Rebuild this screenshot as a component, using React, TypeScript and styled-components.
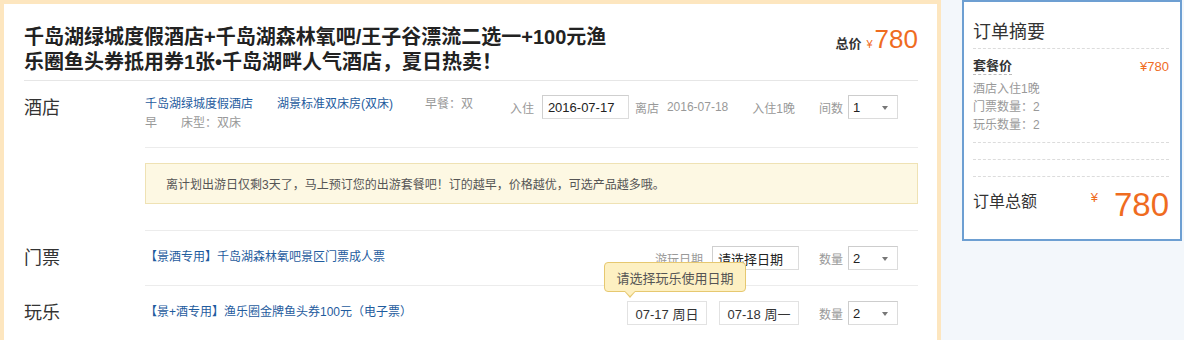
import React from 'react'
import styled, { createGlobalStyle } from 'styled-components'

const GlobalStyle = createGlobalStyle`
  html, body {
    margin: 0;
    padding: 0;
    background: #f3f7fb;
    font-family: "Liberation Sans", "Noto Sans CJK SC", sans-serif;
    color: #333;
  }
`

const Page = styled.div`
  display: flex;
  align-items: flex-start;
  gap: 21px;
  width: 1184px;
  height: 340px;
  overflow: hidden;
`

const Main = styled.div`
  width: 941px;
  min-height: 400px;
  box-sizing: border-box;
  background: #fff;
  border: 4px solid #fde6bf;
  border-bottom: none;
  padding: 0 19px 0 20px;
`

const Header = styled.div`
  display: flex;
  justify-content: space-between;
  align-items: flex-start;
  padding: 21px 0 5px;
  border-bottom: 1px solid #e6e6e6;
`

const Title = styled.h1`
  margin: 0;
  width: 594px;
  font-size: 20px;
  line-height: 25px;
  font-weight: bold;
  color: #222;
`

const TotalPrice = styled.div`
  display: flex;
  align-items: baseline;
  padding-top: 1px;
  color: #ef6c1f;
`

const TotalLabel = styled.span`
  font-size: 13px;
  font-weight: bold;
  color: #333;
  margin-right: 5px;
`

const Yen = styled.span<{ size: number }>`
  font-size: ${({ size }) => size}px;
  margin-right: 2px;
`

const Amount = styled.span<{ size: number }>`
  font-size: ${({ size }) => size}px;
  line-height: 1;
`

const Section = styled.div`
  display: flex;
  align-items: flex-start;
`

const Row = styled.div`
  display: flex;
  align-items: center;
`

const Label = styled.div<{ top?: number }>`
  width: 121px;
  flex-shrink: 0;
  font-size: 18px;
  line-height: 24px;
  padding-top: ${({ top }) => top || 0}px;
  color: #333;
`

const Content = styled.div`
  flex: 1;
`

const HotelTop = styled.div`
  display: flex;
  align-items: flex-start;
  padding: 14px 20px 14px 0;
  border-bottom: 1px solid #ececec;
`

const HotelInfo = styled.div`
  width: 336px;
  font-size: 12px;
  line-height: 19px;
  color: #999;
`

const InfoItem = styled.span<{ gap: number }>`
  display: inline-block;
  margin-right: ${({ gap }) => gap}px;
`

const Link = styled.a`
  color: #1f5c9e;
  text-decoration: none;
  font-size: 12px;
`

const Controls = styled.div`
  display: flex;
  align-items: center;
  margin-left: auto;
  position: relative;
`

const Caption = styled.span<{ gap?: number }>`
  font-size: 12px;
  color: #999;
  margin-right: ${({ gap }) => gap ?? 6}px;
  white-space: nowrap;
`

const Field = styled.div<{ w: number; gap?: number }>`
  width: ${({ w }) => w}px;
  height: 24px;
  box-sizing: border-box;
  border: 1px solid #dcdcdc;
  border-top-color: #cfcfcf;
  border-left-color: #cfcfcf;
  margin-right: ${({ gap }) => gap ?? 0}px;
  padding-left: 5px;
  display: flex;
  align-items: center;
  font-size: 13px;
  color: #222;
  background: #fff;
  position: relative;
`

const DateBox = styled.div<{ gap?: number }>`
  width: 80px;
  height: 24px;
  box-sizing: border-box;
  border: 1px solid #e2e2e2;
  margin-right: ${({ gap }) => gap ?? 0}px;
  display: flex;
  align-items: center;
  justify-content: center;
  font-size: 13px;
  color: #333;
  position: relative;
`

const Select = styled.div`
  width: 50px;
  height: 24px;
  box-sizing: border-box;
  border: 1px solid #dcdcdc;
  border-top-color: #cdcdcd;
  border-left-color: #cdcdcd;
  padding-left: 4px;
  display: flex;
  align-items: center;
  font-size: 13px;
  color: #222;
  position: relative;
  &::after {
    content: '';
    position: absolute;
    right: 9px;
    top: 10px;
    border-left: 3px solid transparent;
    border-right: 3px solid transparent;
    border-top: 4px solid #777;
  }
`

const Notice = styled.div`
  margin: 15px 0 26px;
  height: 41px;
  box-sizing: border-box;
  background: #fdf8e3;
  border: 1px solid #efe2b4;
  padding-left: 20px;
  display: flex;
  align-items: center;
  font-size: 12px;
  color: #555;
`

const ProductLine = styled.div`
  flex: 1;
  height: 55px;
  box-sizing: border-box;
  border-top: 1px solid #ececec;
  display: flex;
  align-items: center;
  padding: 0 20px 0 0;
`

const ProductName = styled(Link)`
  margin-bottom: 5px;
`

const Tooltip = styled.div`
  position: absolute;
  left: -24px;
  bottom: 32px;
  width: 142px;
  height: 30px;
  box-sizing: border-box;
  background: #fdf0c2;
  border: 1px solid #e6c870;
  border-radius: 4px;
  display: flex;
  align-items: center;
  justify-content: center;
  font-size: 13px;
  color: #555;
  white-space: nowrap;
  z-index: 5;
  &::before,
  &::after {
    content: '';
    position: absolute;
    left: 19px;
    border-left: 6px solid transparent;
    border-right: 6px solid transparent;
  }
  &::before {
    bottom: -7px;
    border-top: 7px solid #e6c870;
  }
  &::after {
    bottom: -5px;
    border-top: 6px solid #fdf0c2;
  }
`

const Summary = styled.div`
  width: 220px;
  height: 241px;
  box-sizing: border-box;
  background: #fff;
  border: 2px solid #6d9fd2;
  padding: 0 11px 0 9px;
`

const SummaryTitle = styled.div`
  font-size: 18px;
  line-height: 24px;
  padding: 18px 0 4px;
  color: #333;
  border-bottom: 1px dashed #dcdcdc;
`

const PriceLine = styled.div`
  display: flex;
  justify-content: space-between;
  align-items: center;
  margin-top: 9px;
`

const PackageLabel = styled.span`
  font-size: 13px;
  font-weight: bold;
  color: #333;
  line-height: 16px;
  border-bottom: 1px dashed #bbb;
`

const PackagePrice = styled.span`
  font-size: 13px;
  color: #ef6c1f;
`

const Details = styled.div`
  padding: 5px 0 8px;
  font-size: 12px;
  line-height: 18px;
  color: #999;
  border-bottom: 1px dashed #dcdcdc;
`

const Spacer = styled.div`
  height: 16px;
  border-bottom: 1px dashed #dcdcdc;
`

const TotalLine = styled.div`
  display: flex;
  align-items: flex-start;
  justify-content: space-between;
  padding-top: 8px;
`

const TotalText = styled.span`
  font-size: 16px;
  line-height: 20px;
  margin-top: 7px;
  color: #333;
`

const BigPrice = styled.div`
  display: flex;
  align-items: flex-start;
  color: #ef6c1f;
`

const BigYen = styled.span`
  font-size: 13px;
  line-height: 15px;
  margin: 5px 16px 0 0;
`

const BigAmount = styled.span`
  font-size: 33px;
  line-height: 40px;
`

export default function App() {
  return (
    <>
      <GlobalStyle />
      <Page>
        <Main>
          <Header>
            <Title>
              千岛湖绿城度假酒店+千岛湖森林氧吧/王子谷漂流二选一+100元渔乐圈鱼头券抵用券1张•千岛湖畔人气酒店，夏日热卖！
            </Title>
            <TotalPrice>
              <TotalLabel>总价</TotalLabel>
              <Yen size={11}>¥</Yen>
              <Amount size={26}>780</Amount>
            </TotalPrice>
          </Header>

          <Section>
            <Label top={15}>酒店</Label>
            <Content>
              <HotelTop>
                <HotelInfo>
                  <InfoItem gap={24}>
                    <Link href="#">千岛湖绿城度假酒店</Link>
                  </InfoItem>
                  <InfoItem gap={32}>
                    <Link href="#">湖景标准双床房(双床)</Link>
                  </InfoItem>
                  <InfoItem gap={0}>早餐：双</InfoItem>
                  <InfoItem gap={24}>早</InfoItem>
                  <InfoItem gap={0}>床型：双床</InfoItem>
                </HotelInfo>
                <Controls>
                  <Caption gap={8}>入住</Caption>
                  <Field w={87} gap={6}>2016-07-17</Field>
                  <Caption gap={8}>离店</Caption>
                  <Caption gap={24}>2016-07-18</Caption>
                  <Caption gap={24}>入住1晚</Caption>
                  <Caption gap={5}>间数</Caption>
                  <Select>1</Select>
                </Controls>
              </HotelTop>
              <Notice>
                离计划出游日仅剩3天了，马上预订您的出游套餐吧！订的越早，价格越优，可选产品越多哦。
              </Notice>
            </Content>
          </Section>

          <Row>
            <Label>门票</Label>
            <ProductLine>
              <ProductName href="#">【景酒专用】千岛湖森林氧吧景区门票成人票</ProductName>
              <Controls>
                <Caption gap={9}>游玩日期</Caption>
                <Field w={87} gap={20}>请选择日期</Field>
                <Caption gap={5}>数量</Caption>
                <Select>2</Select>
              </Controls>
            </ProductLine>
          </Row>

          <Row>
            <Label>玩乐</Label>
            <ProductLine>
              <ProductName href="#">【景+酒专用】渔乐圈金牌鱼头券100元（电子票）</ProductName>
              <Controls>
                <DateBox gap={12}>
                  07-17 周日
                  <Tooltip>请选择玩乐使用日期</Tooltip>
                </DateBox>
                <DateBox gap={20}>07-18 周一</DateBox>
                <Caption gap={5}>数量</Caption>
                <Select>2</Select>
              </Controls>
            </ProductLine>
          </Row>
        </Main>

        <Summary>
          <SummaryTitle>订单摘要</SummaryTitle>
          <PriceLine>
            <PackageLabel>套餐价</PackageLabel>
            <PackagePrice>¥780</PackagePrice>
          </PriceLine>
          <Details>
            <div>酒店入住1晚</div>
            <div>门票数量：2</div>
            <div>玩乐数量：2</div>
          </Details>
          <Spacer />
          <Spacer />
          <TotalLine>
            <TotalText>订单总额</TotalText>
            <BigPrice>
              <BigYen>¥</BigYen>
              <BigAmount>780</BigAmount>
            </BigPrice>
          </TotalLine>
        </Summary>
      </Page>
    </>
  )
}
